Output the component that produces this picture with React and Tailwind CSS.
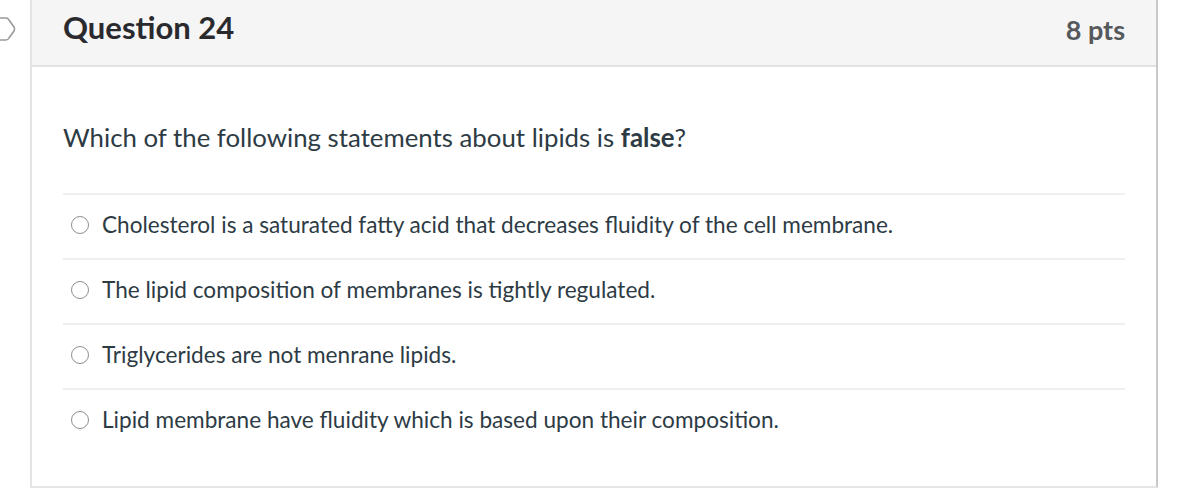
import React from "react";

const answers = [
  "Cholesterol is a saturated fatty acid that decreases fluidity of the cell membrane.",
  "The lipid composition of membranes is tightly regulated.",
  "Triglycerides are not menrane lipids.",
  "Lipid membrane have fluidity which is based upon their composition.",
];

export default function App() {
  return (
    <div className="relative w-[1179px] h-[500px] bg-white overflow-hidden" style={{ fontFamily: "Lato, 'Open Sans', sans-serif" }}>
      <svg className="absolute left-0 top-[16px]" width="18" height="26" viewBox="0 0 18 26">
        <path d="M-10 2 H6 Q8 2 9 4 L14 11 Q15 13 14 15 L9 22 Q8 24 6 24 H-10" fill="none" stroke="#9a9a9a" strokeWidth="1.6" />
      </svg>
      <div className="ml-[30px] w-[1128px] border-l-2 border-l-[#e4e4e4] border-r-2 border-r-[#c9c9c9] border-b-2 border-b-[#e6e6e6] bg-white">
        <div className="h-[67px] bg-[#f5f5f6] border-b-2 border-[#e2e2e4] flex items-start justify-between pl-[31px] pr-[31px] pt-[8px]">
          <div className="text-[31px] font-bold text-[#2a2a2e] leading-[38px]">Question 24</div>
          <div className="text-[27px] font-bold text-[#55595c] leading-[38px] pt-[3px]">8 pts</div>
        </div>
        <div className="pl-[31px] pr-[31px] pt-[54px] pb-[33px]">
          <div className="text-[25.8px] leading-[32px] text-[#2d3b45]">
            Which of the following statements about lipids is <span className="font-bold">false</span>?
          </div>
          <div className="mt-[40px]">
            {answers.map((a, i) => (
              <div key={i} className="border-t-2 border-[#efeff1] h-[65px] flex items-center pl-[8px] gap-[13px] pb-[3px]">
                <span className="w-[18px] h-[18px] rounded-full border-[1.5px] border-[#8f8f8f] bg-white shrink-0" />
                <span className="text-[22.6px] leading-[30px] text-[#2d3b45]">{a}</span>
              </div>
            ))}
          </div>
        </div>
      </div>
    </div>
  );
}
